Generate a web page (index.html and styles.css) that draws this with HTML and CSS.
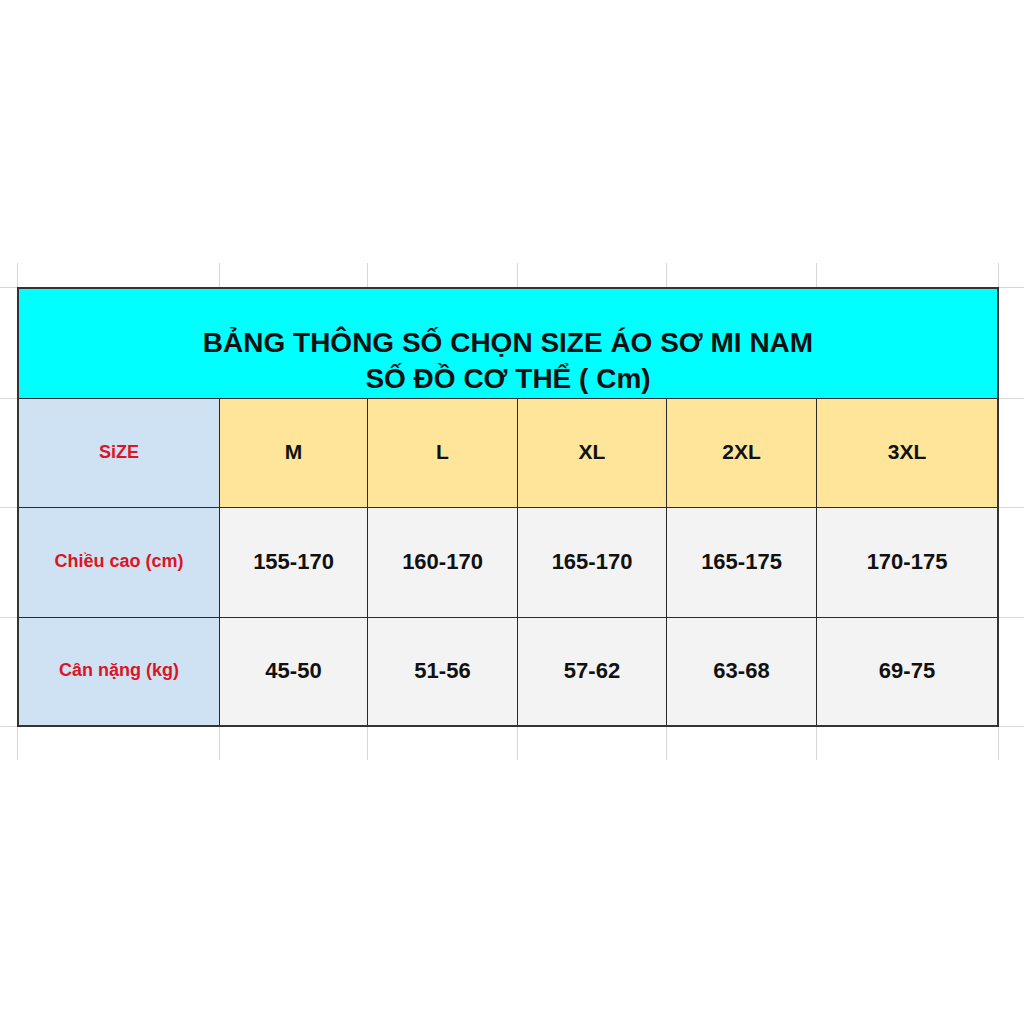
FILE: index.html
```html
<!DOCTYPE html>
<html lang="vi">
<head>
<meta charset="utf-8">
<title>Bảng thông số chọn size áo sơ mi nam</title>
<link rel="stylesheet" href="styles.css">
</head>
<body>
<div class="sheet">
  <div class="size-table">
    <div class="title-cell">
      <div class="title-line">BẢNG THÔNG SỐ CHỌN SIZE ÁO SƠ MI NAM</div>
      <div class="title-line">SỐ ĐỒ CƠ THỂ ( Cm)</div>
    </div>

    <div class="cell label">SiZE</div>
    <div class="cell size">M</div>
    <div class="cell size">L</div>
    <div class="cell size">XL</div>
    <div class="cell size">2XL</div>
    <div class="cell size">3XL</div>

    <div class="cell label">Chiều cao (cm)</div>
    <div class="cell value">155-170</div>
    <div class="cell value">160-170</div>
    <div class="cell value">165-170</div>
    <div class="cell value">165-175</div>
    <div class="cell value">170-175</div>

    <div class="cell label">Cân nặng (kg)</div>
    <div class="cell value">45-50</div>
    <div class="cell value">51-56</div>
    <div class="cell value">57-62</div>
    <div class="cell value">63-68</div>
    <div class="cell value">69-75</div>
  </div>
</div>
</body>
</html>
```
FILE: styles.css
```css
html, body {
  margin: 0;
  padding: 0;
  background: #ffffff;
}

body {
  font-family: "Liberation Sans", Arial, sans-serif;
  width: 1024px;
  height: 1024px;
  overflow: hidden;
}

.sheet {
  margin-top: 263px;
  height: 497px;
  padding: 24px 0 0 17px;
  box-sizing: border-box;
  background:
    linear-gradient(#d6d6d6, #d6d6d6) 17px 0 / 1px 100% no-repeat,
    linear-gradient(#d6d6d6, #d6d6d6) 219px 0 / 1px 100% no-repeat,
    linear-gradient(#d6d6d6, #d6d6d6) 367px 0 / 1px 100% no-repeat,
    linear-gradient(#d6d6d6, #d6d6d6) 517px 0 / 1px 100% no-repeat,
    linear-gradient(#d6d6d6, #d6d6d6) 666px 0 / 1px 100% no-repeat,
    linear-gradient(#d6d6d6, #d6d6d6) 816px 0 / 1px 100% no-repeat,
    linear-gradient(#d6d6d6, #d6d6d6) 998px 0 / 1px 100% no-repeat,
    linear-gradient(#d6d6d6, #d6d6d6) 0 24px / 100% 1px no-repeat,
    linear-gradient(#d6d6d6, #d6d6d6) 0 135px / 100% 1px no-repeat,
    linear-gradient(#d6d6d6, #d6d6d6) 0 244px / 100% 1px no-repeat,
    linear-gradient(#d6d6d6, #d6d6d6) 0 354px / 100% 1px no-repeat,
    linear-gradient(#d6d6d6, #d6d6d6) 0 463px / 100% 1px no-repeat;
}

.size-table {
  width: 982px;
  height: 440px;
  box-sizing: border-box;
  display: grid;
  grid-template-columns: 200px 147px 149px 148px 149px 180px;
  grid-template-rows: 109px 108px 109px 107px;
  gap: 1px;
  border: 2px solid #333333;
  background: #2a2a2a;
}

.title-cell {
  grid-column: 1 / -1;
  background: #00ffff;
  padding-top: 36px;
  text-align: center;
  color: #111111;
  font-weight: 700;
  font-size: 28px;
  line-height: 36px;
}

.title-line {
  white-space: nowrap;
}

.cell {
  display: flex;
  align-items: center;
  justify-content: center;
  font-weight: 700;
  white-space: nowrap;
  padding-bottom: 2px;
}

.label {
  background: #cfe2f3;
  color: #dd1423;
  font-size: 18px;
}

.size {
  background: #ffe599;
  color: #111111;
  font-size: 21px;
}

.value {
  background: #f3f3f3;
  color: #111111;
  font-size: 22px;
}
```
